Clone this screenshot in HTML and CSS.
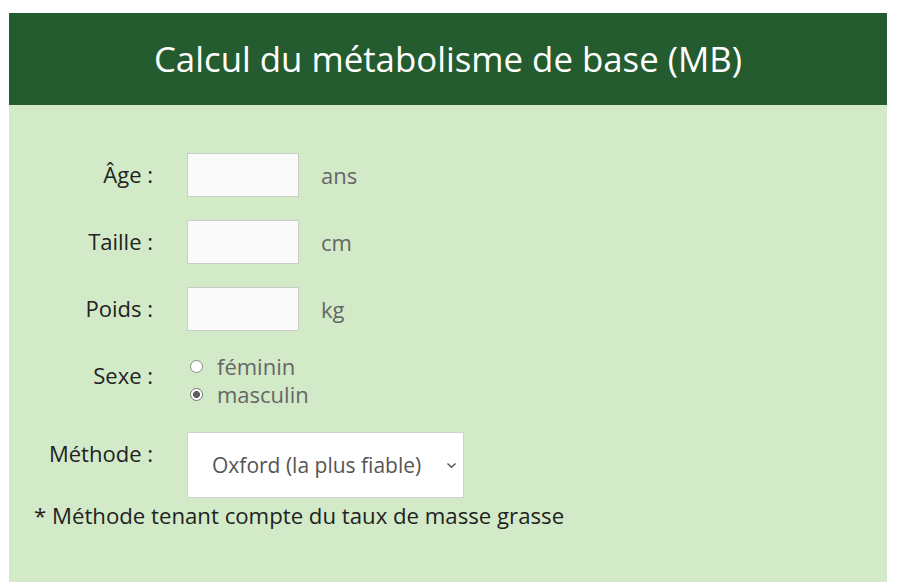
FILE: index.html
```html
<!DOCTYPE html>
<html lang="fr">
<head>
<meta charset="utf-8">
<link rel="stylesheet" href="styles.css">
</head>
<body>
<div class="panel">
  <h1 class="title">Calcul du métabolisme de base (MB)</h1>
  <div class="form">
    <div class="row">
      <label class="label">Âge :</label>
      <div class="field"><input class="num" type="text"><span class="unit">ans</span></div>
    </div>
    <div class="row">
      <label class="label">Taille :</label>
      <div class="field"><input class="num" type="text"><span class="unit">cm</span></div>
    </div>
    <div class="row">
      <label class="label">Poids :</label>
      <div class="field"><input class="num" type="text"><span class="unit">kg</span></div>
    </div>
    <div class="row">
      <label class="label">Sexe :</label>
      <div class="radios">
        <label class="radio"><input type="radio" name="sexe"><span>féminin</span></label>
        <label class="radio"><input type="radio" name="sexe" checked><span>masculin</span></label>
      </div>
    </div>
    <div class="row">
      <label class="label">Méthode :</label>
      <div class="selectbox">
        <span class="selval">Oxford (la plus fiable)</span>
        <svg class="chev" width="11" height="7" viewBox="0 0 11 7"><path d="M1.5 1.5 L5.5 5.2 L9.5 1.5" fill="none" stroke="#555" stroke-width="1.5"/></svg>
      </div>
    </div>
    <p class="note">* Méthode tenant compte du taux de masse grasse</p>
  </div>
</div>
</body>
</html>
```
FILE: styles.css
```css
html, body { margin: 0; padding: 0; background: #fff; }
body { padding: 13px 13px 0 9px; font-family: "Open Sans", "Noto Sans", sans-serif; }
.panel { width: 878px; background: #d2eac8; height: 569px; }
.title {
  margin: 0; height: 92px; background: #245c2f; color: #fff;
  font-weight: 400; font-size: 34.8px; line-height: 92px; text-align: center;
}
.form { padding-top: 48px; display: flex; flex-direction: column; gap: 23px; }
.row { display: grid; grid-template-columns: 144px auto; column-gap: 34px; align-items: start; }
.label { text-align: right; font-size: 22px; line-height: 28px; padding-top: 7px; color: #222; }
.field { display: flex; align-items: center; gap: 22px; }
.num {
  width: 112px; height: 44px; box-sizing: border-box; margin: 0;
  border: 1px solid #c9cdc6; background: #fafafa; border-radius: 0; padding: 0;
}
.unit { font-size: 22px; color: #666; }
.radios { display: flex; flex-direction: column; margin-top: -2px; margin-bottom: 1px; }
.radio { display: flex; align-items: center; font-size: 22px; line-height: 28px; color: #666; }
.radio input {
  appearance: none; width: 13px; height: 13px; margin: 0 14px 0 3px; border-radius: 50%;
  border: 1px solid #8a8a8a; background: #fff; box-sizing: border-box;
}
.radio input:checked { background: radial-gradient(circle, #5e5e5e 0 3.2px, #fff 3.8px); border: 1.5px solid #777; }
.selectbox {
  width: 277px; height: 66px; box-sizing: border-box; border: 1px solid #cfd3cc; background: #fff;
  display: flex; align-items: center; justify-content: space-between; padding: 0 6px 0 24px;
}
.selval { font-size: 21px; color: #555; }
.note { margin: -19px 0 0 25px; font-size: 22.2px; line-height: 28px; color: #222; }
```
